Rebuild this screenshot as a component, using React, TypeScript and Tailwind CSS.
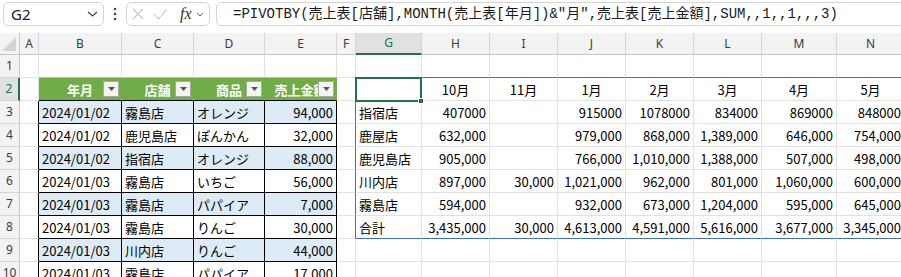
const COLUMNS = ['A', 'B', 'C', 'D', 'E', 'F', 'G', 'H', 'I', 'J', 'K', 'L', 'M', 'N'];
const ROWS = [1, 2, 3, 4, 5, 6, 7, 8, 9, 10];

const TABLE_HEAD = ['年月', '店舗', '商品', '売上金額'];

const SALES = [
  ['2024/01/02', '霧島店', 'オレンジ', '94,000'],
  ['2024/01/02', '鹿児島店', 'ぽんかん', '32,000'],
  ['2024/01/02', '指宿店', 'オレンジ', '88,000'],
  ['2024/01/03', '霧島店', 'いちご', '56,000'],
  ['2024/01/03', '霧島店', 'パパイア', '7,000'],
  ['2024/01/03', '霧島店', 'りんご', '30,000'],
  ['2024/01/03', '川内店', 'りんご', '44,000'],
  ['2024/01/03', '霧島店', 'パパイア', '17,000'],
];

const MONTHS = ['', '10月', '11月', '1月', '2月', '3月', '4月', '5月'];

const PIVOT = [
  ['指宿店', '407000', '', '915000', '1078000', '834000', '869000', '848000'],
  ['鹿屋店', '632,000', '', '979,000', '868,000', '1,389,000', '646,000', '754,000'],
  ['鹿児島店', '905,000', '', '766,000', '1,010,000', '1,388,000', '507,000', '498,000'],
  ['川内店', '897,000', '30,000', '1,021,000', '962,000', '801,000', '1,060,000', '600,000'],
  ['霧島店', '594,000', '', '932,000', '673,000', '1,204,000', '595,000', '645,000'],
  ['合計', '3,435,000', '30,000', '4,613,000', '4,591,000', '5,616,000', '3,677,000', '3,345,000'],
];

const FORMULA = '=PIVOTBY(売上表[店舗],MONTH(売上表[年月])&"月",売上表[売上金額],SUM,,1,,1,,,3)';

type Cell = {
  text: string;
  align: 'left' | 'right' | 'center';
  header?: boolean;
};

// col: 0 = A ... 13 = N
function getCell(row: number, col: number): Cell | null {
  if (col >= 1 && col <= 4) {
    if (row === 2) return { text: TABLE_HEAD[col - 1], align: 'center', header: true };
    if (row >= 3) return { text: SALES[row - 3][col - 1], align: col === 4 ? 'right' : 'left' };
  }
  if (col >= 6) {
    if (row === 2) return { text: MONTHS[col - 6], align: 'center' };
    if (row >= 3 && row <= 8) return { text: PIVOT[row - 3][col - 6], align: col === 6 ? 'left' : 'right' };
  }
  return null;
}

function rightBorder(row: number, col: number) {
  const inTable = col >= 1 && col <= 4;
  if (inTable && row === 2) return 'border-r-[#70ad47]';
  if (row >= 3 && col <= 4) return 'border-r-black';
  if (col === 5 && row >= 2 && row <= 8) return 'border-r-[#3e6fc1]';
  return 'border-r-[#e1e1e1]';
}

function bottomBorder(row: number, col: number) {
  const inTable = col >= 1 && col <= 4;
  if (inTable && row >= 2) return 'border-b-black';
  if (inTable && row === 1) return 'border-b-[#9bc2e6]';
  if (col >= 6 && (row === 1 || row === 8)) return 'border-b-[#3e6fc1]';
  return 'border-b-[#e1e1e1]';
}

function cellBg(row: number, col: number) {
  const inTable = col >= 1 && col <= 4;
  if (inTable && row === 2) return 'bg-[#70ad47]';
  if (inTable && row >= 3 && row % 2 === 1) return 'bg-[#ddebf7]';
  return 'bg-white';
}

const justify = {
  left: 'justify-start',
  right: 'justify-end',
  center: 'justify-center',
};

function FilterButton() {
  return (
    <span className="absolute right-[2px] top-[3px] flex h-4 w-4 items-center justify-center border border-[#a9a9a9] bg-[#f4f4f4]">
      <svg width="7" height="4" viewBox="0 0 7 4">
        <path d="M0 0h7L3.5 4z" fill="#555" />
      </svg>
    </span>
  );
}

function FormulaBar() {
  return (
    <div className="flex h-[33px] items-start pl-[3px] pt-[2px]">
      <div className="flex h-[24px] w-[101px] shrink-0 items-center justify-between rounded-[5px] border border-[#d4d4d4] pl-[7px] pr-[5px]">
        <span className="font-['Noto_Sans',sans-serif] text-[15px] leading-none text-[#222]">G2</span>
        <svg width="11" height="6" viewBox="0 0 11 6">
          <path d="M1 1l4.5 4L10 1" fill="none" stroke="#444" strokeWidth="1.2" />
        </svg>
      </div>
      <div className="flex h-[24px] w-[22px] shrink-0 items-center justify-center">
        <svg width="4" height="14" viewBox="0 0 4 14">
          <circle cx="2" cy="2" r="1.3" fill="#444" />
          <circle cx="2" cy="7" r="1.3" fill="#444" />
          <circle cx="2" cy="12" r="1.3" fill="#444" />
        </svg>
      </div>
      <div className="flex h-[24px] w-[84px] shrink-0 items-center rounded-[5px] border border-[#d4d4d4] pl-[5px]">
        <svg width="12" height="12" viewBox="0 0 12 12">
          <path d="M1 1l10 10M11 1L1 11" stroke="#c4c4c4" strokeWidth="1.1" />
        </svg>
        <svg width="15" height="12" viewBox="0 0 15 12" className="ml-[9px]">
          <path d="M1 6l4.5 5L14 1" fill="none" stroke="#c4c4c4" strokeWidth="1.1" />
        </svg>
        <span className="ml-[12px] font-['Liberation_Serif',serif] text-[16px] italic leading-none text-[#333]">fx</span>
        <svg width="8" height="5" viewBox="0 0 8 5" className="ml-[4px]">
          <path d="M1 1l3 3 3-3" fill="none" stroke="#666" strokeWidth="1" />
        </svg>
      </div>
      <div className="ml-[6px] flex h-[24px] w-[720px] shrink-0 items-center rounded-[5px] border border-[#d4d4d4] pl-[16px]">
        <span className="whitespace-nowrap font-['Liberation_Mono','Noto_Sans_CJK_JP',monospace] text-[14px] leading-none text-[#1a1a1a]">
          {FORMULA}
        </span>
      </div>
    </div>
  );
}

function Sheet() {
  return (
    <div className="grid grid-cols-[20px_19px_83px_72px_71px_72px_19px_66px_68px_68px_68px_68px_68px_75px_68px] grid-rows-[22px_repeat(10,23px)] font-['Noto_Sans_CJK_JP',sans-serif] text-[13px] leading-none">
      <div className="relative border-b border-r border-b-[#c8c8c8] border-r-[#c8c8c8] bg-[#f3f3f3]">
        <svg width="14" height="14" viewBox="0 0 14 14" className="absolute bottom-[3px] right-[3px]">
          <path d="M14 0v14H0z" fill="#d3d3d3" />
        </svg>
      </div>
      {COLUMNS.map((letter) => (
        <div
          key={letter}
          className={
            letter === 'G'
              ? "flex items-center justify-center border-b-2 border-r border-b-[#217346] border-r-[#d5d5d5] bg-[#e1e1e1] font-['Noto_Sans',sans-serif] text-[12px] text-[#217346]"
              : "flex items-center justify-center border-b border-r border-b-[#c8c8c8] border-r-[#d5d5d5] bg-[#f3f3f3] font-['Noto_Sans',sans-serif] text-[12px] text-[#3b3b3b]"
          }
        >
          {letter}
        </div>
      ))}
      {ROWS.map((row) => [
        <div
          key={`h${row}`}
          className={
            row === 2
              ? "flex items-center justify-center border-b border-r-2 border-b-[#d5d5d5] border-r-[#217346] bg-[#e1e1e1] font-['Noto_Sans',sans-serif] text-[12px] text-[#217346]"
              : "flex items-center justify-center border-b border-r border-b-[#d5d5d5] border-r-[#c8c8c8] bg-[#f3f3f3] font-['Noto_Sans',sans-serif] text-[12px] text-[#3b3b3b]"
          }
        >
          {row}
        </div>,
        ...COLUMNS.map((_, col) => {
          const cell = getCell(row, col);
          const selected = row === 2 && col === 6;
          return (
            <div
              key={`${row}-${col}`}
              className={[
                'relative flex items-center whitespace-nowrap border-b border-r px-[3px]',
                selected ? 'z-10 overflow-visible' : 'overflow-hidden',
                rightBorder(row, col),
                bottomBorder(row, col),
                cellBg(row, col),
                cell ? justify[cell.align] : '',
                cell?.header ? 'font-bold text-white' : 'text-black',
              ].join(' ')}
            >
              {cell?.text}
              {cell?.header && <FilterButton />}
              {selected && (
                <span className="absolute -left-px -top-px bottom-[-2px] right-[-1px] border-2 border-[#217346]">
                  <span className="absolute bottom-[-4px] right-[-4px] h-[6px] w-[6px] border border-white bg-[#217346]" />
                </span>
              )}
            </div>
          );
        }),
      ])}
    </div>
  );
}

export default function App() {
  return (
    <div className="h-[277px] w-[901px] overflow-hidden bg-white">
      <FormulaBar />
      <Sheet />
    </div>
  );
}
